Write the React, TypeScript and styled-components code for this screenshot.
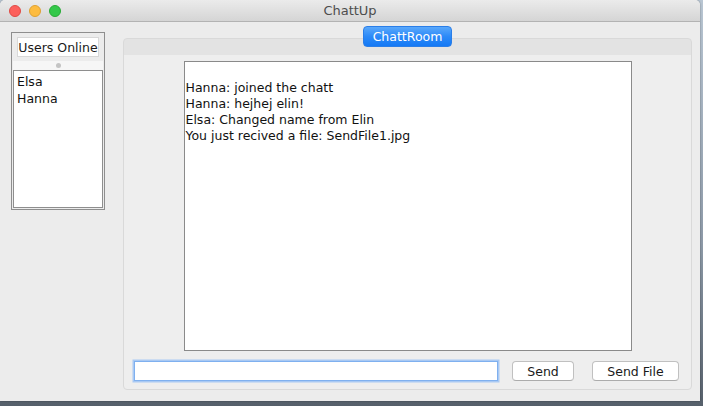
import React from "react";
import styled, { createGlobalStyle } from "styled-components";

const Global = createGlobalStyle`
  html, body { margin: 0; padding: 0; }
  body {
    width: 703px;
    height: 406px;
    overflow: hidden;
    background: linear-gradient(180deg, #b9c6d3 0%, #8d9aa8 60%, #56606b 100%);
    font-family: "DejaVu Sans", "Liberation Sans", sans-serif;
  }
`;

const Window = styled.div`
  width: 700px;
  height: 401px;
  background: #ececec;
  border-radius: 5px 5px 0 0;
  display: flex;
  flex-direction: column;
  overflow: hidden;
  box-shadow: 0 0 2px rgba(0, 0, 0, 0.4);
`;

const TitleBar = styled.div`
  height: 22px;
  flex: none;
  box-sizing: border-box;
  border-bottom: 1px solid #b3b3b3;
  background: linear-gradient(180deg, #ebebeb 0%, #d5d5d5 100%);
  display: flex;
  align-items: center;
  position: relative;
`;

const Lights = styled.div`
  display: flex;
  gap: 8px;
  padding-left: 9px;
`;

const Light = styled.span<{ $c: string; $b: string }>`
  width: 12px;
  height: 12px;
  border-radius: 50%;
  background: ${(p) => p.$c};
  box-sizing: border-box;
  border: 1px solid ${(p) => p.$b};
`;

const Title = styled.div`
  position: absolute;
  left: 0;
  right: 0;
  text-align: center;
  font-size: 13px;
  color: #4d4d4d;
  pointer-events: none;
`;

const Body = styled.div`
  flex: 1;
  display: flex;
  align-items: flex-start;
  padding: 4px 8px 11px 11px;
  gap: 18px;
  min-height: 0;
`;

const Sidebar = styled.div`
  margin-top: 6px;
  width: 94px;
  height: 178px;
  box-sizing: border-box;
  border: 1px solid #8e8e8e;
  display: flex;
  flex-direction: column;
  align-items: stretch;
  padding: 4px 1px 1px 1px;
`;

const HeaderButton = styled.div`
  margin: 0 4px;
  height: 20px;
  box-sizing: border-box;
  background: #fff;
  border: 1px solid #d8d8d8;
  font-size: 12.5px;
  color: #1a1a1a;
  display: flex;
  align-items: center;
  justify-content: center;
  white-space: nowrap;
`;

const Divider = styled.div`
  height: 9px;
  margin-top: 4px;
  background: #f6f6f6;
  display: flex;
  align-items: center;
  justify-content: center;
`;

const Dot = styled.span`
  width: 5px;
  height: 5px;
  border-radius: 50%;
  background: #c4c4c4;
`;

const UserList = styled.div`
  flex: 1;
  box-sizing: border-box;
  background: #fff;
  border: 1px solid #8e8e8e;
  padding: 2px 3px;
  font-size: 12.5px;
  line-height: 17px;
  color: #111;
`;

const TabArea = styled.div`
  flex: 1;
  height: 100%;
  display: flex;
  flex-direction: column;
  align-items: center;
`;

const Tab = styled.div`
  position: relative;
  z-index: 1;
  width: 89px;
  height: 21px;
  box-sizing: border-box;
  margin-bottom: -9px;
  border-radius: 4px;
  background: linear-gradient(180deg, #5aa8fb 0%, #2c8af8 50%, #1479f5 100%);
  border: 1px solid #2a7ee8;
  color: #fff;
  font-size: 12.5px;
  display: flex;
  align-items: center;
  justify-content: center;
`;

const Panel = styled.div`
  align-self: stretch;
  flex: 1;
  box-sizing: border-box;
  border: 1px solid #d9d9d9;
  border-radius: 4px;
  background: linear-gradient(180deg, #e3e3e3 0, #e3e3e3 16px, #eeeeee 16px);
  padding: 22px 0 6px 0;
  display: flex;
  flex-direction: column;
  align-items: center;
`;

const ChatLog = styled.div`
  width: 448px;
  height: 290px;
  box-sizing: border-box;
  background: #fff;
  border: 1px solid #8a8a8a;
  padding: 2px 0 0 1px;
  font-size: 12.5px;
  line-height: 16px;
  color: #111;
  white-space: pre;
`;

const InputRow = styled.div`
  align-self: stretch;
  display: flex;
  align-items: center;
  margin-top: 10px;
  padding: 0 12px 0 10px;
`;

const MessageInput = styled.input`
  width: 364px;
  height: 20px;
  box-sizing: border-box;
  border: 1px solid #7fb0ef;
  box-shadow: 0 0 0 1.5px #a9c9f3;
  outline: none;
  background: #fff;
  margin-right: 14px;
`;

const Button = styled.button<{ $w: number; $gap?: number }>`
  width: ${(p) => p.$w}px;
  height: 20px;
  box-sizing: border-box;
  border: 1px solid #c0c0c0;
  border-bottom-color: #acacac;
  border-radius: 4px;
  background: #fff;
  font-family: inherit;
  font-size: 12.5px;
  color: #1a1a1a;
  padding: 0;
  margin-right: ${(p) => p.$gap ?? 0}px;
`;

const lines = [
  "",
  "Hanna: joined the chatt",
  "Hanna: hejhej elin!",
  "Elsa: Changed name from Elin",
  "You just recived a file: SendFile1.jpg",
];

export default function App() {
  return (
    <>
      <Global />
      <Window>
        <TitleBar>
          <Lights>
            <Light $c="#fc605c" $b="#de4a45" />
            <Light $c="#fdbc40" $b="#dea132" />
            <Light $c="#34c84a" $b="#27aa35" />
          </Lights>
          <Title>ChattUp</Title>
        </TitleBar>
        <Body>
          <Sidebar>
            <HeaderButton>Users Online</HeaderButton>
            <Divider>
              <Dot />
            </Divider>
            <UserList>
              <div>Elsa</div>
              <div>Hanna</div>
            </UserList>
          </Sidebar>
          <TabArea>
            <Tab>ChattRoom</Tab>
            <Panel>
              <ChatLog>{lines.join("\n")}</ChatLog>
              <InputRow>
                <MessageInput />
                <Button $w={62} $gap={18}>Send</Button>
                <Button $w={87}>Send File</Button>
              </InputRow>
            </Panel>
          </TabArea>
        </Body>
      </Window>
    </>
  );
}
